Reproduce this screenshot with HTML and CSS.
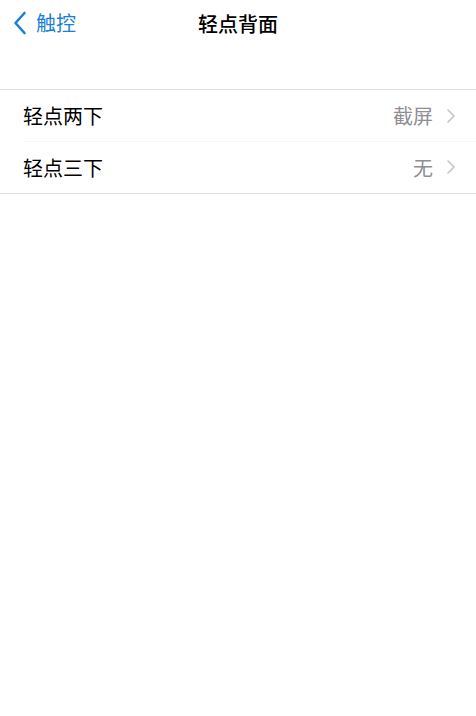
FILE: index.html
```html
<!doctype html>
<html lang="zh">
<head>
  <meta charset="utf-8">
  <title>轻点背面</title>
  <link rel="stylesheet" href="styles.css">
</head>
<body>
  <div class="nav">
    <a class="back" href="#">
      <svg class="back-icon" width="14" height="24" viewBox="0 0 14 24">
        <path d="M11.5 2 L2.5 12 L11.5 22" fill="none" stroke="#1a7fd6" stroke-width="2.6" stroke-linecap="round" stroke-linejoin="round"/>
      </svg>
      <span>触控</span>
    </a>
    <div class="title">轻点背面</div>
  </div>
  <div class="list">
    <div class="row">
      <span class="label">轻点两下</span>
      <span class="value">截屏</span>
      <svg class="chevron" width="10" height="16" viewBox="0 0 10 16">
        <path d="M2 2 L8 8 L2 14" fill="none" stroke="#c4c4c6" stroke-width="1.6" stroke-linecap="round" stroke-linejoin="round"/>
      </svg>
    </div>
    <div class="row">
      <span class="label">轻点三下</span>
      <span class="value">无</span>
      <svg class="chevron" width="10" height="16" viewBox="0 0 10 16">
        <path d="M2 2 L8 8 L2 14" fill="none" stroke="#c4c4c6" stroke-width="1.6" stroke-linecap="round" stroke-linejoin="round"/>
      </svg>
    </div>
  </div>
</body>
</html>
```
FILE: styles.css
```css
body {
  margin: 0;
  background: #ffffff;
  font-family: "Noto Sans CJK SC", "Noto Sans", sans-serif;
  color: #000;
}

.nav {
  position: relative;
  height: 46px;
  display: flex;
  align-items: center;
  justify-content: center;
}

.back {
  position: absolute;
  left: 13px;
  top: 11px;
  display: flex;
  align-items: center;
  gap: 9px;
  color: #1a7fd6;
  text-decoration: none;
  font-size: 20px;
}

.back span {
  line-height: 24px;
}

.title {
  font-size: 20px;
  font-weight: 500;
  line-height: 24px;
  margin-top: 1px;
}

.list {
  margin-top: 43px;
  border-top: 1px solid #dcdcdc;
  border-bottom: 1px solid #dcdcdc;
}

.row {
  height: 51px;
  display: flex;
  align-items: center;
  padding: 0 20px 0 23px;
  font-size: 20px;
}

.row + .row {
  height: 52px;
  background: linear-gradient(#f6f6f6, #f6f6f6) 23px 0 / 100% 1px no-repeat;
}

.label {
  flex: 1;
}

.value {
  color: #8e8e93;
  margin-right: 13px;
}

.chevron {
  display: block;
}
```
